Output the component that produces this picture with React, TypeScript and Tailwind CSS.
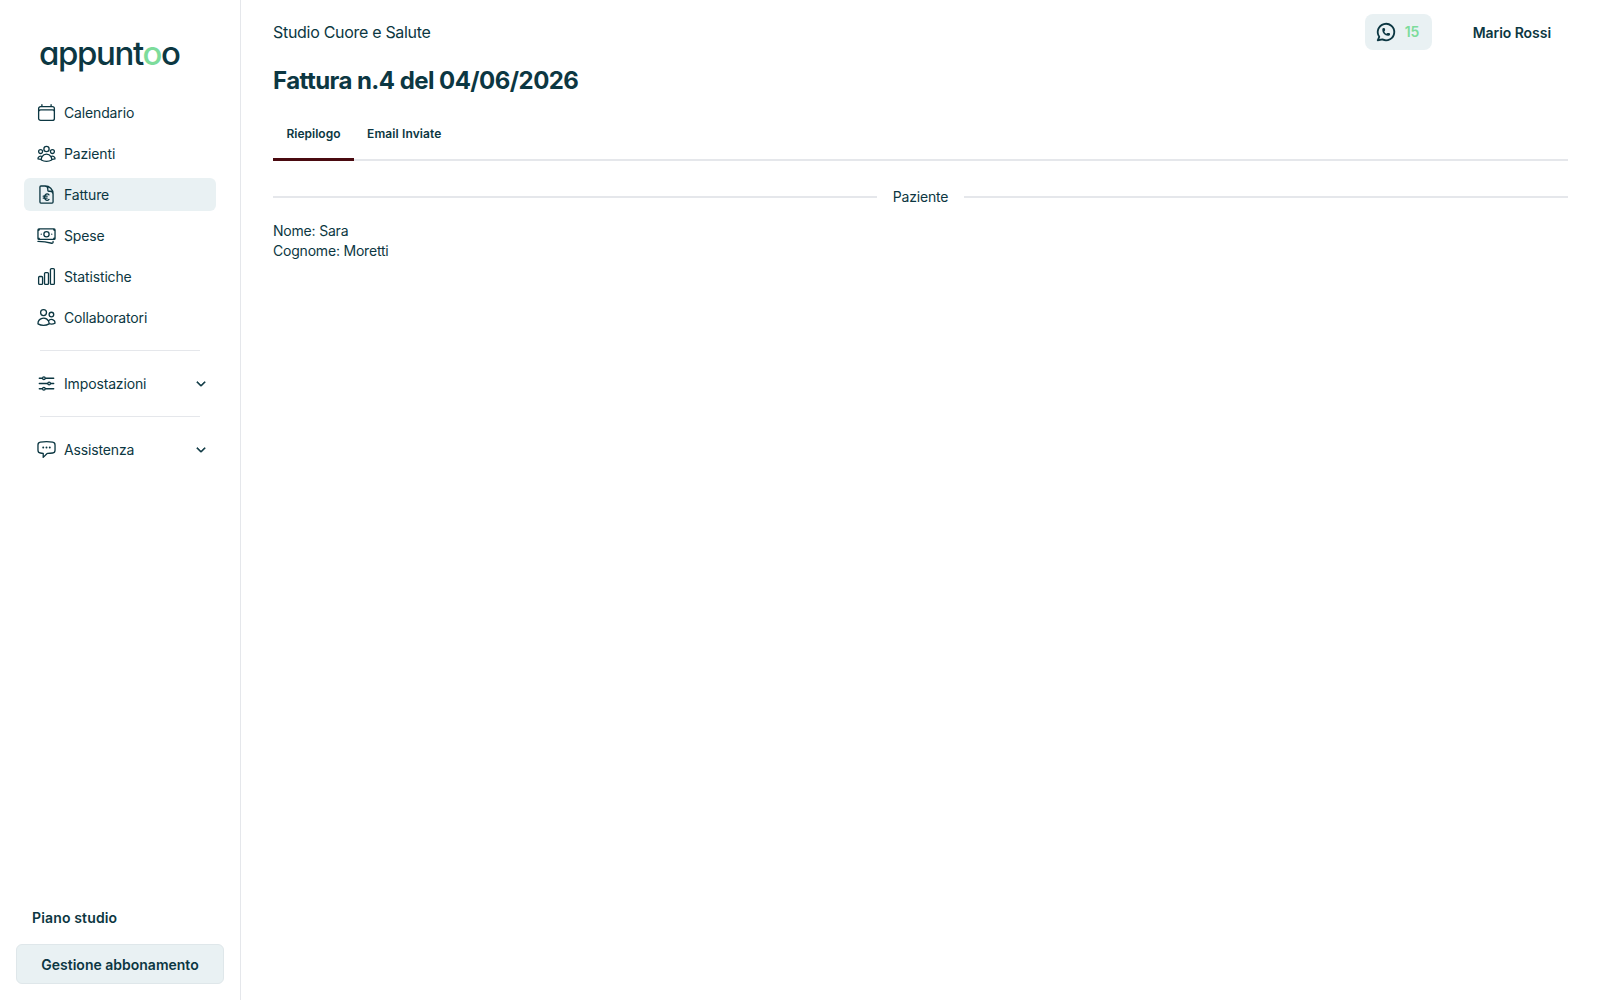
import React from "react";
import {
  HiOutlineCalendar,
  HiOutlineUserGroup,
  HiOutlineDocumentCurrencyEuro,
  HiOutlineBanknotes,
  HiOutlineChartBar,
  HiOutlineUsers,
  HiOutlineAdjustmentsHorizontal,
  HiOutlineChatBubbleLeftEllipsis,
  HiChevronDown,
} from "react-icons/hi2";
import { TbBrandWhatsapp } from "react-icons/tb";

function NavItem({ icon: Icon, label, active, chevron }: { icon: React.ComponentType<{ className?: string }>; label: string; active?: boolean; chevron?: boolean }) {
  return (
    <div className={`flex h-[33px] w-[192px] items-center gap-[7px] rounded-md px-3 ${active ? "bg-[#e9f1f3]" : ""}`}>
      <Icon className="h-[21px] w-[21px] shrink-0" />
      <span className="flex-1 text-sm tracking-[-0.15px]">{label}</span>
      {chevron ? <HiChevronDown className="-mr-[3px] h-3 w-3 shrink-0 stroke-[2]" /> : null}
    </div>
  );
}

export default function App() {
  return (
    <div className="flex h-[1000px] w-[1600px] bg-white font-['Inter',sans-serif] text-[#0c3742]">
      <aside className="flex h-full w-[241px] shrink-0 flex-col border-r border-[#e5e7eb]">
        <div className="flex h-[96px] items-start pl-[39px] pt-[29px]">
          <span className="text-[33px] font-medium leading-[48px] tracking-[-1.4px] [font-feature-settings:'cv11']">
            appunt<span className="text-[#7ddc9b]">o</span>o
          </span>
        </div>
        <nav className="flex flex-col gap-2 pl-6">
          <NavItem icon={HiOutlineCalendar} label="Calendario" />
          <NavItem icon={HiOutlineUserGroup} label="Pazienti" />
          <NavItem icon={HiOutlineDocumentCurrencyEuro} label="Fatture" active />
          <NavItem icon={HiOutlineBanknotes} label="Spese" />
          <NavItem icon={HiOutlineChartBar} label="Statistiche" />
          <NavItem icon={HiOutlineUsers} label="Collaboratori" />
          <div className="my-2 ml-4 h-px w-40 bg-[#e5e7eb]" />
          <NavItem icon={HiOutlineAdjustmentsHorizontal} label="Impostazioni" chevron />
          <div className="my-2 ml-4 h-px w-40 bg-[#e5e7eb]" />
          <NavItem icon={HiOutlineChatBubbleLeftEllipsis} label="Assistenza" chevron />
        </nav>
        <div className="mt-auto px-4 pb-4">
          <div className="mb-[16px] pl-4 text-sm font-semibold leading-5 tracking-[0.15px]">Piano studio</div>
          <button className="h-10 w-full rounded-md border border-[#dfe7ea] bg-[#e9f1f3] pt-0.5 text-sm font-semibold">Gestione abbonamento</button>
        </div>
      </aside>
      <main className="flex-1 pl-8 pr-8">
        <header className="flex h-[65px] items-start justify-between">
          <div className="pt-[20px] text-base leading-6 tracking-[-0.3px]">Studio Cuore e Salute</div>
          <div className="flex items-center pt-[14px] pr-[17px]">
            <div className="flex h-9 w-[67px] items-center gap-[8px] rounded-lg bg-[#e9f1f3] pl-[10px]">
              <TbBrandWhatsapp className="h-[22px] w-[22px] stroke-2" />
              <span className="text-sm font-semibold text-[#7ddc9b]">15</span>
            </div>
            <div className="ml-[41px] mt-0.5 text-sm font-semibold tracking-[-0.05px]">Mario Rossi</div>
          </div>
        </header>
        <h1 className="text-2xl leading-8 font-bold tracking-[-0.55px]">Fattura n.4 del 04/06/2026</h1>
        <div className="mt-4 flex h-[48px] border-b-2 border-[#e5e7eb]">
          <div className="-mb-[2px] flex h-[48px] w-[81px] items-center justify-center border-b-[3px] border-[#4a0a10] pb-1 text-xs font-semibold">Riepilogo</div>
          <div className="flex h-[46px] items-center pb-1 pl-[13px] text-xs font-semibold tracking-[0.12px]">Email Inviate</div>
        </div>
        <div className="mt-[26px] flex items-center gap-4">
          <div className="h-0.5 flex-1 bg-[#e5e7eb]" />
          <div className="text-sm leading-5 tracking-[-0.2px]">Paziente</div>
          <div className="h-0.5 flex-1 bg-[#e5e7eb]" />
        </div>
        <div className="mt-[14px] text-sm leading-5 tracking-[-0.2px]">
          <div>Nome: Sara</div>
          <div>Cognome: Moretti</div>
        </div>
      </main>
    </div>
  );
}
